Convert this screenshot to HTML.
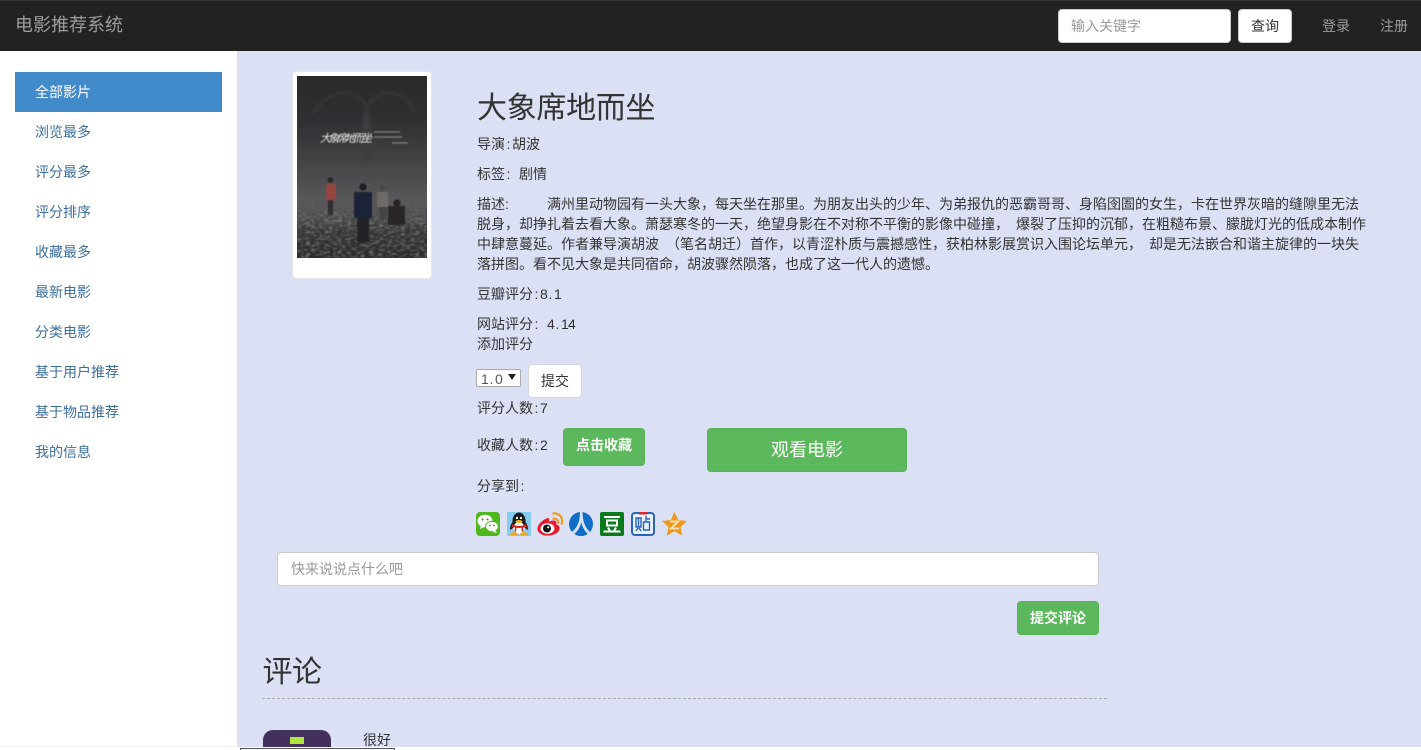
<!DOCTYPE html>
<html lang="zh"><head><meta charset="utf-8"><title>电影推荐系统</title>
<style>
*{box-sizing:border-box}
html,body{margin:0;padding:0;width:1421px;height:750px;overflow:hidden;background:#dce0f4}
body{font:14px/20px "Liberation Sans","Noto Sans CJK SC",sans-serif;color:#333}
#r{position:relative;width:1421px;height:750px;overflow:hidden;background:#dce0f4}
.a{position:absolute;white-space:pre}
.c{display:inline-block;width:7px;text-align:center}
a{text-decoration:none}
.nav{left:0;top:0;width:1421px;height:51px;background:#222;border-top:1px solid #333}
.side{left:0;top:51px;width:237px;height:695px;background:#fff}
.si{left:35px;color:#3d6f9c;height:20px}
.btn{border-radius:4px;text-align:center}
.g{background:#5cb85c;border:1px solid #57b257;color:#fff}
.w{background:#fff;border:1px solid #ccc;color:#333}
svg{display:block}
</style></head><body><div id="r">
<div class="a nav"></div>
<div class="a" style="left:15px;top:15px;font-size:18px;color:#9d9d9d">电影推荐系统</div>
<div class="a" style="left:1058px;top:9px;width:173px;height:34px;background:#fff;border:1px solid #ccc;border-radius:4px;padding:6px 12px;color:#999">输入关键字</div>
<div class="a btn w" style="left:1238px;top:9px;width:54px;height:34px;padding-top:6px">查询</div>
<div class="a" style="left:1322px;top:16px;color:#9d9d9d">登录</div>
<div class="a" style="left:1380px;top:16px;color:#9d9d9d">注册</div>

<div class="a side"></div>
<div class="a" style="left:15px;top:72px;width:207px;height:40px;background:#428bca;color:#fff;padding:10px 20px">全部影片</div>
<a class="a si" style="top:122px">浏览最多</a>
<a class="a si" style="top:162px">评分最多</a>
<a class="a si" style="top:202px">评分排序</a>
<a class="a si" style="top:242px">收藏最多</a>
<a class="a si" style="top:282px">最新电影</a>
<a class="a si" style="top:322px">分类电影</a>
<a class="a si" style="top:362px">基于用户推荐</a>
<a class="a si" style="top:402px">基于物品推荐</a>
<a class="a si" style="top:442px">我的信息</a>

<div class="a" style="left:292px;top:71px;width:140px;height:208px;background:#fff;border:1px solid #e6e6ee;border-radius:4px"></div>
<svg class="a" style="left:297px;top:76px" width="130" height="182" viewBox="0 0 130 182">
<defs>
<linearGradient id="p" x1="0" y1="0" x2="0" y2="1"><stop offset="0" stop-color="#29292b"/><stop offset=".25" stop-color="#303033"/><stop offset=".5" stop-color="#464649"/><stop offset=".68" stop-color="#58585b"/><stop offset=".78" stop-color="#4c4c4e"/><stop offset=".86" stop-color="#343434"/><stop offset="1" stop-color="#2b2b2b"/></linearGradient>
<filter id="b"><feGaussianBlur stdDeviation=".5"/></filter>
<filter id="b2"><feGaussianBlur stdDeviation="1.500"/></filter>
<filter id="n" x="0" y="0" width="100%" height="100%"><feTurbulence type="fractalNoise" baseFrequency=".22 .45" numOctaves="2" seed="4"/><feColorMatrix values="0 0 0 0 .42 0 0 0 0 .42 0 0 0 0 .42 1.300 0 0 0 -.55"/><feGaussianBlur stdDeviation=".4"/></filter>
<linearGradient id="f" x1="0" y1="0" x2="0" y2="1"><stop offset="0" stop-color="#fff" stop-opacity="0"/><stop offset=".35" stop-color="#fff"/></linearGradient>
<mask id="mk"><rect y="125" width="130" height="57" fill="url(#f)"/></mask>
</defs>
<rect width="130" height="182" fill="url(#p)"/>
<path d="M16 38Q28 17 50 17Q66 19 70 32Q76 18 92 17Q110 18 118 36" fill="none" stroke="#3f3f43" stroke-width="1.500" filter="url(#b2)"/>
<path d="M68 32Q62 60 66 84L74 84Q78 60 70 32Z" fill="#3c3c40" filter="url(#b2)"/>
<rect y="125" width="130" height="57" filter="url(#n)" mask="url(#mk)"/>
<g filter="url(#b)">
<text x="23" y="66" font-size="11" fill="#e4e4e4" font-style="italic" font-family="Noto Sans CJK SC" textLength="52">大象席地而坐</text>
<path d="M77 56h26M77 61h28M95 67h16" stroke="#77777a" stroke-width="1.500"/>
<rect x="29" y="108" width="10" height="16" fill="#93453f"/><circle cx="33.500" cy="104" r="2.800" fill="#2c2622"/><rect x="31" y="124" width="5" height="15" fill="#2d2d31"/>
<rect x="57" y="116" width="18" height="26" fill="#1f2238"/><circle cx="66" cy="111" r="3.600" fill="#1d1d22"/><rect x="60" y="142" width="12" height="24" fill="#242428"/>
<rect x="80" y="116" width="11" height="15" fill="#6f6a68"/><circle cx="85" cy="112" r="2.600" fill="#4a4745"/><rect x="82" y="131" width="8" height="13" fill="#454547"/>
<rect x="91" y="130" width="17" height="19" fill="#2a2727"/><circle cx="100" cy="127" r="3.500" fill="#252320"/>
</g>
</svg>

<div class="a" style="left:477px;top:90px;font-size:30px;line-height:38px;letter-spacing:-.3px">大象席地而坐</div>
<div class="a" style="left:477px;top:134px">导演<span class="c">:</span>胡波</div>
<div class="a" style="left:477px;top:164px">标签<span class="c">:</span><span class="c"> </span>剧情</div>
<div class="a" style="left:477px;top:194px">描述:</div>
<div class="a" style="left:547px;top:194px">满州里动物园有一头大象，每天坐在那里。为朋友出头的少年、为弟报仇的恶霸哥哥、身陷囹圄的女生，卡在世界灰暗的缝隙里无法</div>
<div class="a" style="left:477px;top:214px">脱身，却挣扎着去看大象。萧瑟寒冬的一天，绝望身影在不对称不平衡的影像中碰撞，<span class="c"> </span>爆裂了压抑的沉郁，在粗糙布景、朦胧灯光的低成本制作</div>
<div class="a" style="left:477px;top:234px">中肆意蔓延。作者兼导演胡波<span class="c"> </span>（笔名胡迁）首作，以青涩朴质与震撼感性，获柏林影展赏识入围论坛单元，<span class="c"> </span>却是无法嵌合和谐主旋律的一块失</div>
<div class="a" style="left:477px;top:254px">落拼图。看不见大象是共同宿命，胡波骤然陨落，也成了这一代人的遗憾。</div>
<div class="a" style="left:477px;top:284px">豆瓣评分<span class="c">:</span><span class="c">8</span><span class="c">.</span><span class="c">1</span></div>
<div class="a" style="left:477px;top:314px">网站评分<span class="c">:</span><span class="c"> </span><span class="c">4</span><span class="c">.</span><span class="c">1</span><span class="c">4</span></div>
<div class="a" style="left:477px;top:334px">添加评分</div>
<div class="a" style="left:476px;top:369px;width:45px;height:18px;background:#fff;border:1px solid #aaa;border-radius:2px;line-height:18px;padding-left:4px;color:#555"><span class="c">1</span><span class="c">.</span><span class="c">0</span></div>
<div class="a" style="left:508px;top:374px;width:0;height:0;border:4px solid transparent;border-top:6px solid #222;border-bottom:0"></div>
<div class="a btn w" style="left:528px;top:364px;width:54px;height:34px;padding-top:6px;border-color:#d4d6e2">提交</div>
<div class="a" style="left:477px;top:398px">评分人数<span class="c">:</span><span class="c">7</span></div>
<div class="a" style="left:477px;top:435px">收藏人数<span class="c">:</span><span class="c">2</span></div>
<div class="a btn g" style="left:563px;top:428px;width:82px;height:38px;padding-top:6px;font-weight:bold">点击收藏</div>
<div class="a btn g" style="left:707px;top:428px;width:200px;height:44px;padding-top:11px;font-size:18px">观看电影</div>
<div class="a" style="left:477px;top:476px">分享到<span class="c">:</span></div>

<svg class="a" style="left:476px;top:512px" width="24" height="24" viewBox="0 0 24 24"><rect width="24" height="24" rx="4" fill="#4fb81e"/><ellipse cx="9" cy="9" rx="7.500" ry="6.300" fill="#fff"/><ellipse cx="16" cy="14.500" rx="6.300" ry="5.300" fill="#fff" stroke="#4fb81e"/><path d="M5 13l-1 4 4-2z" fill="#fff"/><path d="M19 18l2 3-4-1z" fill="#fff"/><circle cx="6.500" cy="7.500" r="1" fill="#3b8f16"/><circle cx="11.500" cy="7.500" r="1" fill="#3b8f16"/><circle cx="14" cy="13.500" r=".9" fill="#3b8f16"/><circle cx="18" cy="13.500" r=".9" fill="#3b8f16"/></svg>
<svg class="a" style="left:507px;top:512px" width="24" height="24" viewBox="0 0 24 24"><rect width="24" height="24" fill="#86ccf0"/><ellipse cx="12" cy="9" rx="6.500" ry="8.500" fill="#1b1b1b"/><path d="M5.500 10Q2 15 3.500 18L7 15zM18.500 10Q22 15 20.500 18L17 15z" fill="#1b1b1b"/><ellipse cx="12" cy="16" rx="5.500" ry="6" fill="#fff"/><path d="M5 12q7 4 14 0l1 3q-3 .5-4 .5l.500 4.500-2-1V15.800q-2.500.4-5 0l-.5 3.700-1.500.5.500-4.800Q6 15 4.500 15z" fill="#d3261d"/><ellipse cx="12" cy="9.500" rx="3.500" ry="1.500" fill="#f5b41a"/><ellipse cx="7" cy="22" rx="4" ry="1.800" fill="#f5a81a"/><ellipse cx="17" cy="22" rx="4" ry="1.800" fill="#f5a81a"/><circle cx="10" cy="6" r="1.100" fill="#fff"/><circle cx="14" cy="6" r="1.100" fill="#fff"/></svg>
<svg class="a" style="left:537px;top:512px" width="26" height="24" viewBox="0 0 26 24"><path d="M11 6C5 8 0 13 .5 17.500 1 22 7 24 12.500 23.500c6-.5 10.500-4 10-8-.3-2-2.500-3-3.500-3 1.500-3-1-5-5-3.500l-2 .8c.6-3-.5-4.300-1-3.800z" fill="#e6162d"/><ellipse cx="10.500" cy="16.500" rx="7" ry="5.300" fill="#fff"/><circle cx="10" cy="16.500" r="4" fill="#111"/><circle cx="11.200" cy="15.300" r="1.100" fill="#fff"/><path d="M15.500 7c4-1.200 6.500 1.500 5.500 5M15.500 1.500c7-1 11.500 4.500 9 11" fill="none" stroke="#f39a1d" stroke-width="2.200"/></svg>
<svg class="a" style="left:569px;top:512px" width="24" height="24" viewBox="0 0 24 24"><circle cx="12" cy="12" r="12" fill="#0f6fc6"/><path d="M11 0C11 8 9 15 3 20l2 2C9 19 11 15 12.300 10.500 13.500 15 15.500 19 19 22l2-2C15.500 15 13.500 8 13.500 0z" fill="#dce0f4"/><path d="M7 23q5 2 10 0l-5-7z" fill="#0f6fc6"/></svg>
<svg class="a" style="left:600px;top:512px" width="24" height="24" viewBox="0 0 24 24"><rect width="24" height="24" rx="2" fill="#0b7a1d"/><path d="M4 5h16M7 8.500h10v5H7zM8 15.500l2 3.500M16 15.500l-2 3.500M3.500 19.500h17" fill="none" stroke="#fff" stroke-width="2"/></svg>
<svg class="a" style="left:631px;top:512px" width="24" height="24" viewBox="0 0 24 24"><rect x="1" y="1" width="22" height="22" rx="3" fill="#e9f1fb" stroke="#2b63b8" stroke-width="2"/><rect x="8" y="0" width="8" height="2.500" fill="#d8262c"/><path d="M5 6h5v9H5zM7.500 6v9M5 19l2-3M10 19l-2-3M15 4v6M15 7h4M12.500 10h6v8h-6z" fill="none" stroke="#2b63b8" stroke-width="1.400"/></svg>
<svg class="a" style="left:662px;top:512px" width="25" height="24" viewBox="0 0 25 24"><path d="M12.500 0l3.700 8 8.800 1-6.500 6 1.800 8.800-7.800-4.500-7.800 4.500L6.500 15 0 9l8.800-1z" fill="#ee9a1f"/><path d="M8 9.500h8l-7 7h8" fill="none" stroke="#fbe7c4" stroke-width="1.800"/></svg>

<div class="a" style="left:277px;top:552px;width:822px;height:34px;background:#fff;border:1px solid #ccc;border-radius:4px;padding:6px 13px;color:#999">快来说说点什么吧</div>
<div class="a btn g" style="left:1017px;top:601px;width:82px;height:34px;padding-top:6px;font-weight:bold">提交评论</div>
<div class="a" style="left:262.500px;top:653px;font-size:30px;line-height:40px;letter-spacing:-.5px">评论</div>
<div class="a" style="left:262px;top:698px;width:845px;border-top:1px dashed #aaa"></div>
<div class="a" style="left:263px;top:730px;width:68px;height:20px;background:#43305c;border-radius:10px 10px 0 0"></div>
<div class="a" style="left:290px;top:737px;width:14px;height:7px;background:#aee53f"></div>
<div class="a" style="left:363px;top:730px">很好</div>
<div class="a" style="left:0;top:746px;width:237px;height:1px;background:#eee"></div>
<div class="a" style="left:0;top:747px;width:1421px;height:3px;background:#fff"></div>
<div class="a" style="left:240px;top:748px;width:155px;height:6px;background:#fff;border:1px solid #555"></div>
</div></body></html>
